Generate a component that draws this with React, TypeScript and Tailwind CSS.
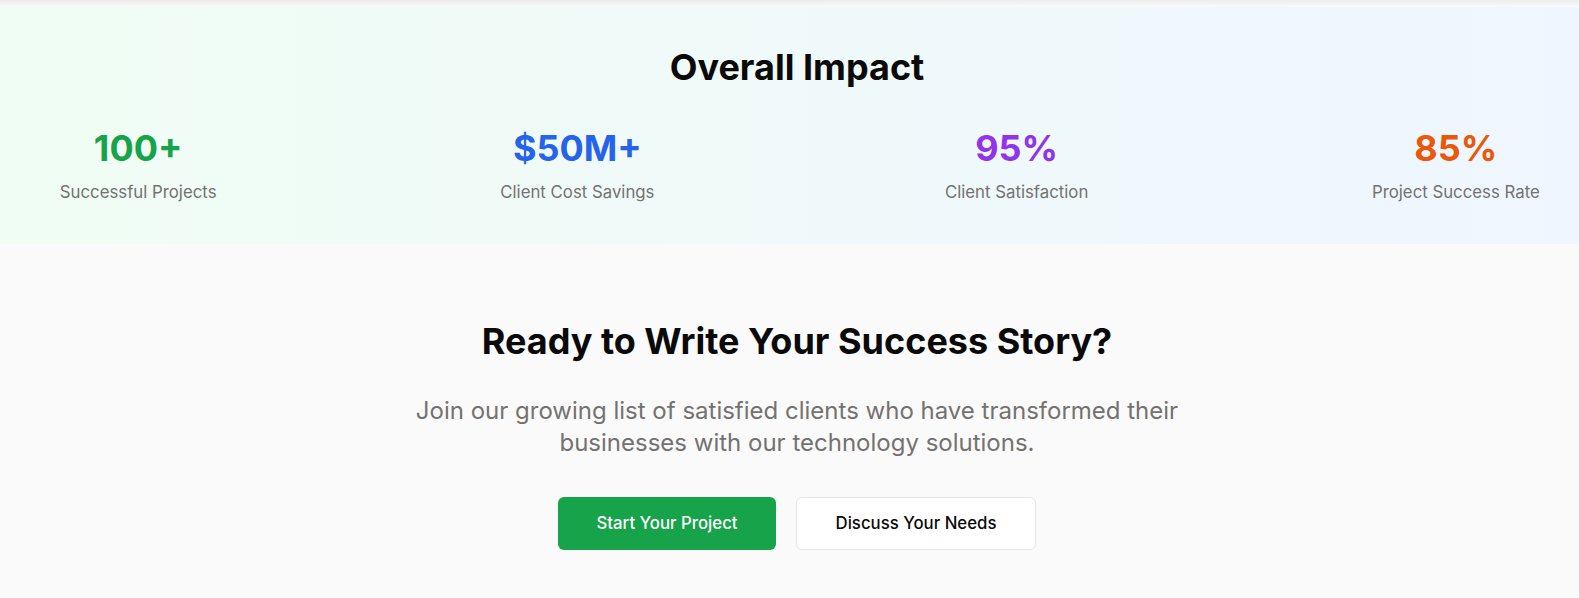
const stats = [
  { value: '100+', label: 'Successful Projects', color: 'text-[#16a34a]' },
  { value: '$50M+', label: 'Client Cost Savings', color: 'text-[#2563eb]' },
  { value: '95%', label: 'Client Satisfaction', color: 'text-[#9333ea]' },
  { value: '85%', label: 'Project Success Rate', color: 'text-[#ea580c]' },
];

export default function App() {
  return (
    <div className="w-full overflow-hidden bg-[#fafafa]">
      <div className="min-h-[598px] w-[1594px] font-['Inter',sans-serif] text-[#0a0a0a]">
        {/* edge shadow from the block above */}
        <div className="h-[7px] bg-linear-to-b from-[#ececec] to-[#fafafa]" />

        {/* Overall impact */}
        <section className="bg-linear-to-r from-[#f0fdf4] to-[#eff6ff] pt-10 pb-10">
          <h2 className="text-center text-4xl font-bold mb-[41px]">Overall Impact</h2>
          <div className="grid grid-cols-4 gap-[199px] px-[18px]">
            {stats.map((s) => (
              <div key={s.label} className="text-center">
                <div className={`text-4xl font-bold ${s.color}`}>{s.value}</div>
                <div className="mt-3 text-[16.8px] leading-6 text-[#747270]">{s.label}</div>
              </div>
            ))}
          </div>
        </section>

        {/* CTA */}
        <section className="pt-[77px] pb-12 text-center">
          <h2 className="text-4xl font-bold">Ready to Write Your Success Story?</h2>
          <p className="mx-auto mt-[34px] max-w-3xl text-2xl leading-8 text-[#747270]">
            Join our growing list of satisfied clients who have transformed their businesses with our technology solutions.
          </p>
          <div className="mt-[38px] flex justify-center gap-5">
            <button className="h-[53px] w-[218px] rounded-md bg-[#16a34a] text-[16.8px] font-medium text-white">
              Start Your Project
            </button>
            <button className="h-[53px] w-[240px] rounded-md border border-[#e5e5e5] bg-white text-[16.8px] font-medium text-[#0a0a0a]">
              Discuss Your Needs
            </button>
          </div>
        </section>
      </div>
    </div>
  );
}
